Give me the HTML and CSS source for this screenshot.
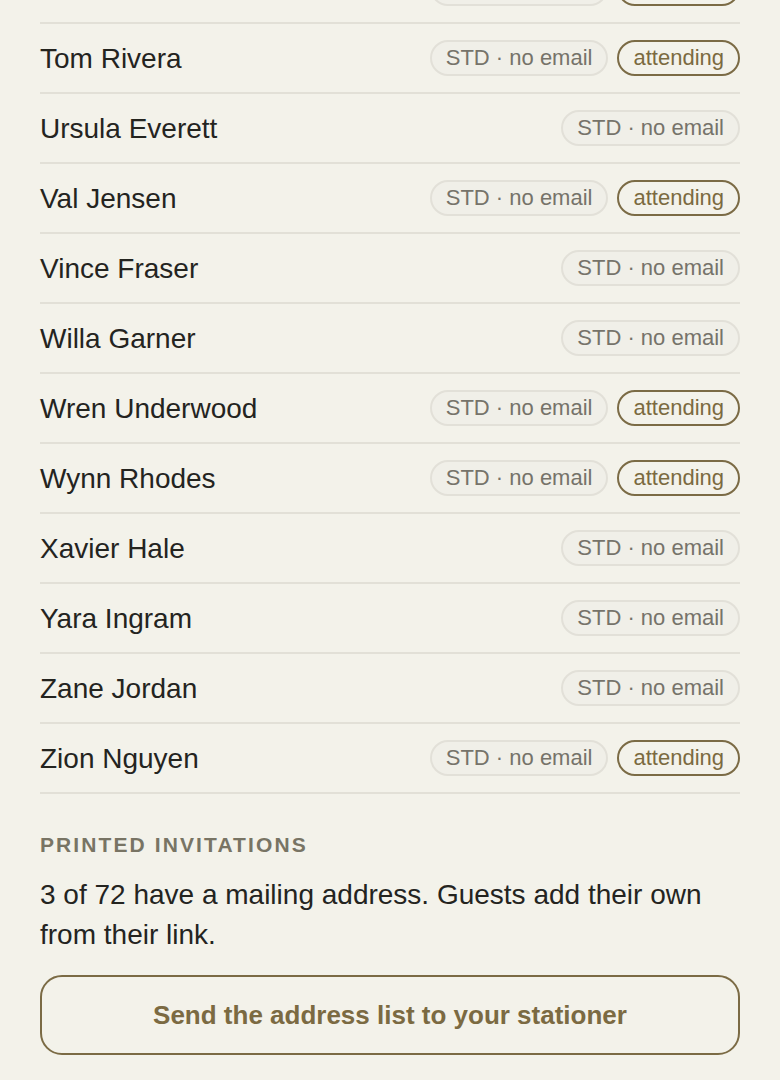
FILE: index.html
```html
<!DOCTYPE html>
<html lang="en">
<head>
<meta charset="utf-8">
<title>Guests</title>
<link rel="stylesheet" href="styles.css">
</head>
<body>
<main class="page">
  <ul class="guest-list">
    <li class="guest"><span class="name">Theo Marsh</span><span class="tags"><span class="pill pill-std">STD · no email</span><span class="pill pill-attending">attending</span></span></li>
    <li class="guest"><span class="name">Tom Rivera</span><span class="tags"><span class="pill pill-std">STD · no email</span><span class="pill pill-attending">attending</span></span></li>
    <li class="guest"><span class="name">Ursula Everett</span><span class="tags"><span class="pill pill-std">STD · no email</span></span></li>
    <li class="guest"><span class="name">Val Jensen</span><span class="tags"><span class="pill pill-std">STD · no email</span><span class="pill pill-attending">attending</span></span></li>
    <li class="guest"><span class="name">Vince Fraser</span><span class="tags"><span class="pill pill-std">STD · no email</span></span></li>
    <li class="guest"><span class="name">Willa Garner</span><span class="tags"><span class="pill pill-std">STD · no email</span></span></li>
    <li class="guest"><span class="name">Wren Underwood</span><span class="tags"><span class="pill pill-std">STD · no email</span><span class="pill pill-attending">attending</span></span></li>
    <li class="guest"><span class="name">Wynn Rhodes</span><span class="tags"><span class="pill pill-std">STD · no email</span><span class="pill pill-attending">attending</span></span></li>
    <li class="guest"><span class="name">Xavier Hale</span><span class="tags"><span class="pill pill-std">STD · no email</span></span></li>
    <li class="guest"><span class="name">Yara Ingram</span><span class="tags"><span class="pill pill-std">STD · no email</span></span></li>
    <li class="guest"><span class="name">Zane Jordan</span><span class="tags"><span class="pill pill-std">STD · no email</span></span></li>
    <li class="guest"><span class="name">Zion Nguyen</span><span class="tags"><span class="pill pill-std">STD · no email</span><span class="pill pill-attending">attending</span></span></li>
  </ul>
  <section class="printed">
    <h2 class="section-title">Printed invitations</h2>
    <p class="section-text">3 of 72 have a mailing address. Guests add their own from their link.</p>
    <button class="btn-outline" type="button">Send the address list to your stationer</button>
  </section>
</main>
</body>
</html>
```
FILE: styles.css
```css
html, body {
  margin: 0;
  padding: 0;
}
body {
  height: 1080px;
  overflow: hidden;
  display: flex;
  flex-direction: column;
  justify-content: flex-end;
  background: #f3f2ea;
  font-family: "Liberation Sans", Arial, sans-serif;
  color: #24241f;
}
.page {
  padding: 0 40px 25px;
}
.guest-list {
  list-style: none;
  margin: 0;
  padding: 0;
}
.guest {
  display: flex;
  align-items: center;
  justify-content: space-between;
  height: 68px;
  border-bottom: 2px solid #e2e0d7;
}
.name {
  font-size: 28px;
  color: #24241f;
  padding-top: 2px;
}
.tags {
  display: flex;
  gap: 9px;
}
.pill {
  display: inline-block;
  font-size: 22px;
  line-height: 32px;
  padding: 0 14px;
  border-radius: 999px;
  border: 2px solid;
  white-space: nowrap;
}
.pill-std {
  background: #f0efe8;
  border-color: #e2e0d8;
  color: #76736a;
}
.pill-attending {
  border-color: #7b6b45;
  color: #7b6a40;
}
.printed {
  padding-top: 39px;
}
.section-title {
  margin: 0 0 19px;
  font-size: 21px;
  font-weight: bold;
  letter-spacing: 0.1em;
  text-transform: uppercase;
  color: #787464;
  line-height: 23px;
}
.section-text {
  margin: 0 0 20px;
  font-size: 28px;
  line-height: 40px;
  color: #24241f;
}
.btn-outline {
  display: block;
  width: 100%;
  height: 80px;
  border: 2px solid #7b6b45;
  border-radius: 22px;
  background: transparent;
  font-family: "Liberation Sans", Arial, sans-serif;
  font-size: 26px;
  font-weight: bold;
  color: #7b6a42;
  cursor: pointer;
}
```
